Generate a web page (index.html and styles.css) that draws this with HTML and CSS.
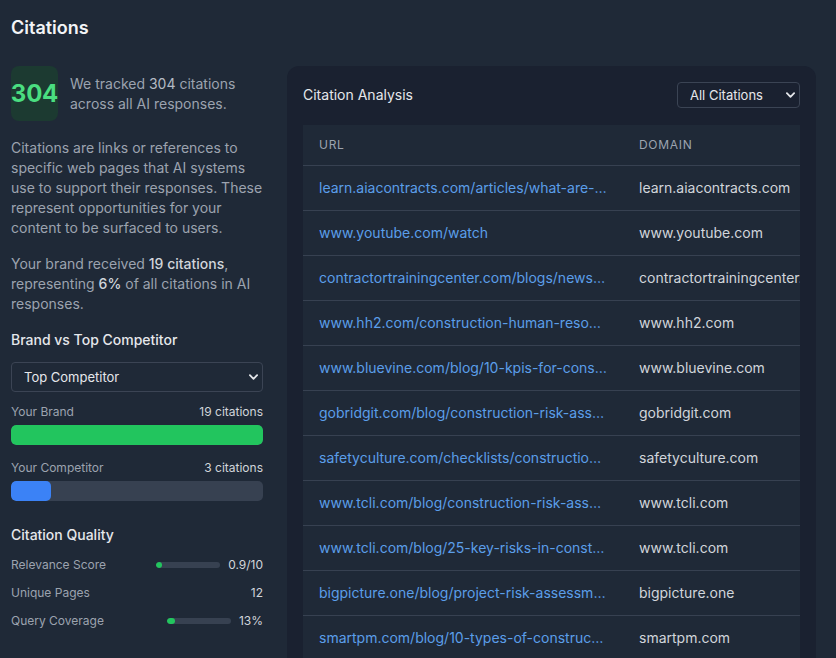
FILE: index.html
```html
<!DOCTYPE html>
<html>
<head>
<meta charset="utf-8">
<link rel="stylesheet" href="styles.css">
</head>
<body>
<div class="page">
  <h1 class="title">Citations</h1>
  <div class="layout">
    <aside class="side">
      <div class="stat">
        <div class="stat-box">304</div>
        <p class="stat-text">We tracked <span class="hl">304</span> citations across all AI responses.</p>
      </div>
      <p class="para">Citations are links or references to specific web pages that AI systems use to support their responses. These represent opportunities for your content to be surfaced to users.</p>
      <p class="para para2">Your brand received <strong>19 citations</strong>, representing <strong>6%</strong> of all citations in AI responses.</p>

      <h2 class="sub">Brand vs Top Competitor</h2>
      <div class="select-wrap wide">
        <select class="select"><option>Top Competitor</option></select>
        <svg class="chev" viewBox="0 0 10 6" width="9" height="6"><path d="M1 1 L5 5 L9 1" fill="none" stroke="#e5e7eb" stroke-width="2" stroke-linecap="round" stroke-linejoin="round"/></svg>
      </div>

      <div class="cmp">
        <div class="cmp-row"><span class="cmp-label">Your Brand</span><span class="cmp-val">19 citations</span></div>
        <div class="bar"><div class="bar-fill green" style="width:100%"></div></div>
      </div>
      <div class="cmp cmp2">
        <div class="cmp-row"><span class="cmp-label">Your Competitor</span><span class="cmp-val">3 citations</span></div>
        <div class="bar"><div class="bar-fill blue" style="width:16%"></div></div>
      </div>

      <h2 class="sub sub2">Citation Quality</h2>
      <div class="q-list">
        <div class="q-row">
          <span class="q-label">Relevance Score</span>
          <span class="q-right"><span class="mini"><span class="mini-fill" style="width:9%"></span></span><span class="q-val">0.9/10</span></span>
        </div>
        <div class="q-row">
          <span class="q-label">Unique Pages</span>
          <span class="q-right"><span class="q-val">12</span></span>
        </div>
        <div class="q-row">
          <span class="q-label">Query Coverage</span>
          <span class="q-right"><span class="mini"><span class="mini-fill" style="width:13%"></span></span><span class="q-val">13%</span></span>
        </div>
      </div>
    </aside>

    <section class="card">
      <div class="card-head">
        <h2 class="card-title">Citation Analysis</h2>
        <div class="select-wrap small">
          <select class="select"><option>All Citations</option></select>
          <svg class="chev" viewBox="0 0 10 6" width="9" height="6"><path d="M1 1 L5 5 L9 1" fill="none" stroke="#e5e7eb" stroke-width="2" stroke-linecap="round" stroke-linejoin="round"/></svg>
        </div>
      </div>
      <div class="table-wrap">
        <table class="tbl">
          <thead>
            <tr><th>URL</th><th>Domain</th></tr>
          </thead>
          <tbody>
            <tr><td class="url"><span class="link">learn.aiacontracts.com/articles/what-are-the-key-risks</span></td><td class="dom">learn.aiacontracts.com</td></tr>
            <tr><td class="url"><span class="link">www.youtube.com/watch</span></td><td class="dom">www.youtube.com</td></tr>
            <tr><td class="url"><span class="link">contractortrainingcenter.com/blogs/news/construction</span></td><td class="dom">contractortrainingcenter.com</td></tr>
            <tr><td class="url"><span class="link">www.hh2.com/construction-human-resources</span></td><td class="dom">www.hh2.com</td></tr>
            <tr><td class="url"><span class="link">www.bluevine.com/blog/10-kpis-for-construction</span></td><td class="dom">www.bluevine.com</td></tr>
            <tr><td class="url"><span class="link">gobridgit.com/blog/construction-risk-assessment</span></td><td class="dom">gobridgit.com</td></tr>
            <tr><td class="url"><span class="link">safetyculture.com/checklists/construction-risk</span></td><td class="dom">safetyculture.com</td></tr>
            <tr><td class="url"><span class="link">www.tcli.com/blog/construction-risk-assessment</span></td><td class="dom">www.tcli.com</td></tr>
            <tr><td class="url"><span class="link">www.tcli.com/blog/25-key-risks-in-construction</span></td><td class="dom">www.tcli.com</td></tr>
            <tr><td class="url"><span class="link">bigpicture.one/blog/project-risk-assessment</span></td><td class="dom">bigpicture.one</td></tr>
            <tr><td class="url"><span class="link">smartpm.com/blog/10-types-of-construction-risk</span></td><td class="dom">smartpm.com</td></tr>
          </tbody>
        </table>
      </div>
    </section>
  </div>
</div>
</body>
</html>
```

FILE: styles.css
```css
* { box-sizing: border-box; }
html, body {
  margin: 0;
  padding: 0;
  background: #1f2937;
  height: 100%;
  overflow: hidden;
}
body {
  font-family: Inter, "Noto Sans", "DejaVu Sans", sans-serif;
  color: #e5e7eb;
}
.page {
  padding: 14px 20px 0 11px;
}
.title {
  margin: 0 0 24px 0;
  font-size: 18px;
  line-height: 28px;
  font-weight: 600;
  color: #f3f4f6;
}
.layout {
  display: grid;
  grid-template-columns: 252px 1fr;
  gap: 24px;
  align-items: start;
}
.side { display: flex; flex-direction: column; }
.stat {
  display: flex;
  align-items: center;
  gap: 12px;
}
.stat-box {
  width: 47px;
  height: 55px;
  flex: none;
  border-radius: 8px;
  background: #1c3a31;
  color: #4ade80;
  font-size: 24px;
  font-weight: 700;
  display: flex;
  align-items: center;
  justify-content: center;
  letter-spacing: -0.2px;
}
.stat-text {
  margin: 0;
  font-size: 14px;
  line-height: 20px;
  color: #9ca3af;
}
.hl { color: #b5bbc4; }
.para {
  margin: 17px 0 0 0;
  font-size: 14px;
  line-height: 20px;
  color: #9ca3af;
}
.para2 { margin-top: 16px; }
.para strong { font-weight: 500; color: #d1d5db; }
.sub {
  margin: 16px 0 0 0;
  font-size: 14px;
  line-height: 20px;
  font-weight: 500;
  color: #e5e7eb;
}
.sub2 { margin-top: 24px; }
.select-wrap { position: relative; }
.select-wrap.wide { margin-top: 12px; }
.select {
  appearance: none;
  -webkit-appearance: none;
  width: 100%;
  font-family: inherit;
  font-size: 13px;
  color: #e5e7eb;
  background: #1f2937;
  border: 1px solid #3b4454;
  border-radius: 4px;
  outline: none;
}
.wide .select { height: 30px; padding: 0 30px 0 12px; }
.small { width: 123px; }
.small .select { height: 26px; padding: 0 24px 0 12px; background: #1a2130; }
.chev {
  position: absolute;
  right: 5px;
  top: 50%;
  margin-top: -3px;
  pointer-events: none;
}
.cmp { margin-top: 12px; }
.cmp2 { margin-top: 15px; }
.cmp-row {
  display: flex;
  justify-content: space-between;
  font-size: 12px;
  line-height: 16px;
  margin-bottom: 5px;
}
.cmp-label { color: #9ca3af; }
.cmp-val { color: #d1d5db; }
.bar {
  height: 20px;
  background: #374151;
  border-radius: 5px;
  overflow: hidden;
}
.bar-fill { height: 100%; border-radius: 5px; }
.green { background: #22c55e; }
.blue { background: #3b82f6; }
.q-list {
  margin-top: 12px;
  display: flex;
  flex-direction: column;
  gap: 12px;
}
.q-row {
  display: flex;
  justify-content: space-between;
  align-items: center;
  font-size: 12px;
  line-height: 16px;
}
.q-label { color: #9ca3af; }
.q-right { display: flex; align-items: center; gap: 8px; }
.q-val { color: #d1d5db; }
.mini {
  width: 64px;
  height: 6px;
  background: #374151;
  border-radius: 3px;
  overflow: hidden;
  display: block;
}
.mini-fill {
  display: block;
  height: 100%;
  background: #22c55e;
  border-radius: 3px;
  min-width: 5px;
}
.card {
  background: #1a2130;
  border-radius: 12px;
  padding: 16px 16px 0 16px;
  height: 620px;
  min-width: 0;
}
.card-head {
  display: flex;
  justify-content: space-between;
  align-items: center;
  margin-bottom: 17px;
}
.card-title {
  margin: 0;
  font-size: 14px;
  font-weight: 400;
  line-height: 20px;
  color: #e5e7eb;
}
.table-wrap {
  overflow: hidden;
  background: #1f2937;
}
.tbl {
  border-collapse: collapse;
  white-space: nowrap;
}
.tbl th {
  text-align: left;
  font-size: 12px;
  font-weight: 400;
  text-transform: uppercase;
  letter-spacing: 0.7px;
  color: #9ca3af;
  height: 40px;
  padding: 0 16px;
  border-bottom: 1px solid #374151;
}
.tbl td {
  height: 45px;
  padding: 0 16px;
  font-size: 14px;
  border-bottom: 1px solid #374151;
}
.url { width: 320px; max-width: 320px; }
.link {
  display: block;
  max-width: 288px;
  overflow: hidden;
  text-overflow: ellipsis;
  color: #5b9ee9;
}
.dom { color: #d1d5db; }
```
